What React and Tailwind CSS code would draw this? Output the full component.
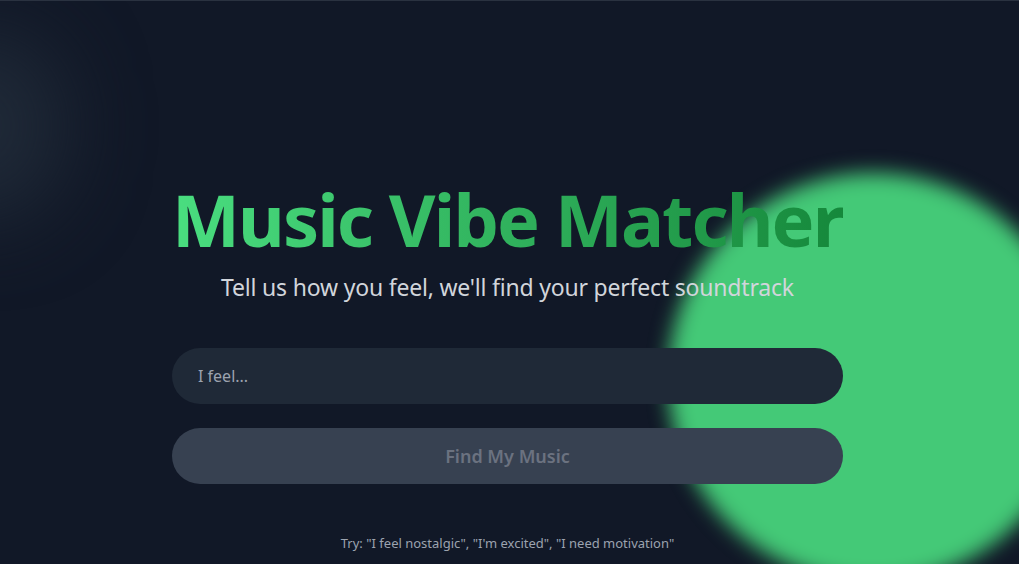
import { useState } from "react";

export default function App() {
  const [mood, setMood] = useState("");
  return (
    <div
      className="relative h-[564px] overflow-hidden border-t border-[#2a3240] bg-[#111827] text-white"
      style={{ fontFamily: '"Noto Sans", "Open Sans", sans-serif' }}
    >
      {/* background blobs */}
      <div className="absolute -left-[100px] top-[30px] h-[190px] w-[165px] rounded-full bg-[#1f2937] blur-2xl" />
      <div className="absolute left-[668px] top-[172px] h-[410px] w-[410px] rounded-full bg-[#44c977] blur-[10px]" />

      <div className="relative ml-[172px] flex w-[671px] flex-col items-center pt-[178px]">
        <h1 className="whitespace-nowrap bg-gradient-to-r from-[#4ade80] to-[#15883b] bg-clip-text text-[72px] leading-[80px] font-bold tracking-[-1.9px] text-transparent">
          Music Vibe Matcher
        </h1>
        <p className="mt-[13px] text-[23px] leading-[30px] tracking-[-0.2px] text-[#d1d5db]">
          Tell us how you feel, we'll find your perfect soundtrack
        </p>

        <div className="mt-[46px] flex w-full flex-col gap-6">
          <input
            value={mood}
            onChange={(e) => setMood(e.target.value)}
            placeholder="I feel..."
            className="h-14 w-full rounded-full bg-[#1f2937] px-[26px] text-base text-white outline-none placeholder:text-[#9ca3af]"
          />
          <button
            disabled={!mood}
            className="h-14 w-full rounded-full bg-[#374151] text-lg font-semibold text-[#6b7280]"
          >
            Find My Music
          </button>
        </div>

        <p className="mt-[50px] text-[13px] text-[#9ca3af]">
          Try: "I feel nostalgic", "I'm excited", "I need motivation"
        </p>
      </div>
    </div>
  );
}
